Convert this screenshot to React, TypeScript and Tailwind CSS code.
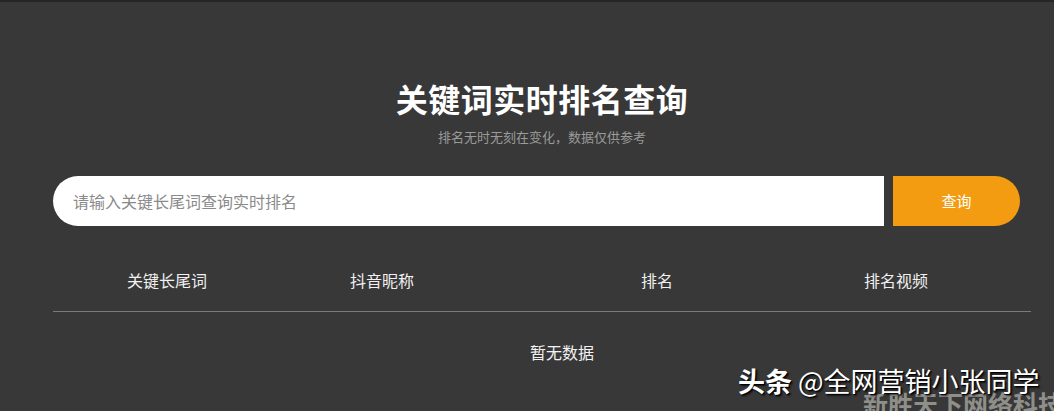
const CJK = "font-['Noto_Sans_CJK_SC','Noto_Sans',sans-serif]";

const COLUMNS = ["关键长尾词", "抖音昵称", "排名", "排名视频"];

export default function App() {
  return (
    <div className={`relative h-[411px] w-[1054px] overflow-hidden bg-[#383838] ${CJK}`}>
      <div className="h-[2px] bg-[#262626]" />

      <div className="pl-[53px] pr-[23px] pt-[76px]">
        <h1 className="text-center text-[32px] font-bold leading-[40px] tracking-[0.5px] text-white">
          关键词实时排名查询
        </h1>
        <p className="mt-[10px] text-center text-[13px] leading-[18px] text-[#9a9a9a]">
          排名无时无刻在变化，数据仅供参考
        </p>

        <div className="mt-[30px] flex h-[50px] gap-[9px] pr-[11px]">
          <div className="flex flex-1 items-center rounded-l-full rounded-r-[3px] bg-white pl-[20px]">
            <span className="text-[16px] text-[#8a8a8a]">请输入关键长尾词查询实时排名</span>
          </div>
          <button className="w-[127px] rounded-l-[3px] rounded-r-full bg-[#f39c12] text-[15px] text-white">
            查询
          </button>
        </div>

        <div className="mt-[31px] grid h-[55px] grid-cols-[228px_202px_348px_130px_1fr] items-center border-b border-[#7a7a7a] text-[16px] text-[#f0f0f0]">
          {COLUMNS.map((c) => (
            <div key={c} className="pb-[8px] text-center">
              {c}
            </div>
          ))}
          <div />
        </div>

        <div className="mt-[29px] pl-[477px] text-[16px] leading-[22px] text-[#f2f2f2]">暂无数据</div>
      </div>

      <div className="absolute left-[863px] top-[386px] whitespace-nowrap text-[25px] font-bold leading-[34px] text-[#8f8f8a]">
        新胜天下网络科技
      </div>
      <div className="absolute left-[738px] top-[363px] whitespace-nowrap text-[27px] leading-[36px] text-white [text-shadow:1px_1px_1px_#000,2px_2px_2px_rgba(0,0,0,0.6)]">
        <span className="font-bold">头条</span> @全网营销小张同学
      </div>
    </div>
  );
}
